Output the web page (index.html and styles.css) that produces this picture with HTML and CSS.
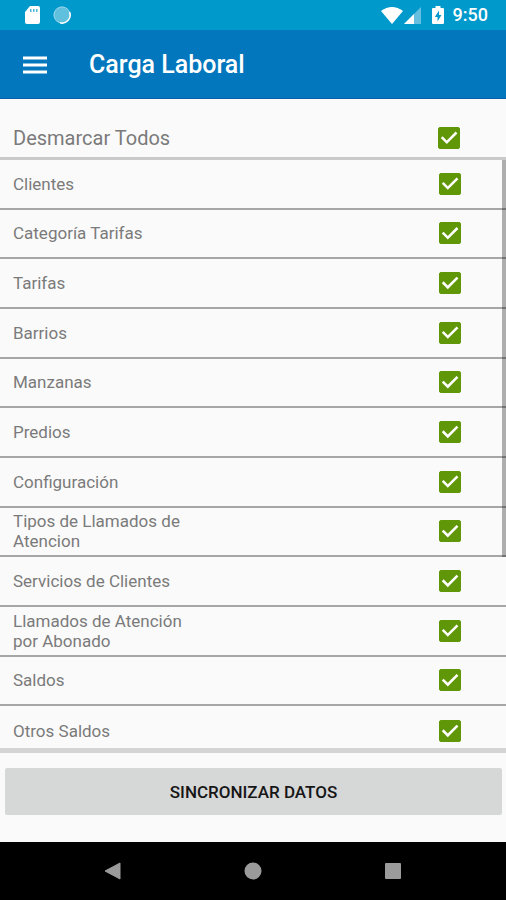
FILE: index.html
```html
<!DOCTYPE html>
<html lang="es">
<head>
<meta charset="utf-8">
<meta name="viewport" content="width=device-width, initial-scale=1">
<title>Carga Laboral</title>
<link rel="stylesheet" href="styles.css">
</head>
<body>
<div class="status">
  <div class="status-group">
    <svg class="sd" width="16" height="20" viewBox="0 0 16 20"><path d="M6 1h8q2 0 2 2v14q0 2-2 2H3q-2 0-2-2V7z" fill="#fff"/><path d="M6 4h1.500v3H6zM9 4h1.500v3H9zM12 4h1.500v3H12z" fill="#4cb6da"/></svg>
    <svg width="20" height="20" viewBox="0 0 20 20"><circle cx="10" cy="10" r="8.500" fill="#62c0df"/><circle cx="10" cy="10" r="8" fill="none" stroke="#8fd2e8" stroke-width="1"/><path d="M17.500 7A8 8 0 0 1 8 17.800" fill="none" stroke="#fff" stroke-width="1.500"/></svg>
  </div>
  <div class="status-group status-right">
    <svg width="24" height="20" viewBox="0 0 24 20"><path d="M1 6Q12-2 23 6L12 19z" fill="#fff"/></svg>
    <svg width="18" height="20" viewBox="0 0 18 20"><path d="M17 2v17H0z" fill="#66bfdf"/><path d="M10 9v10H0z" fill="#fff"/></svg>
    <svg class="battery" width="12" height="20" viewBox="0 0 12 20"><path d="M3.500 1h5v2H11q1 0 1 1v14q0 1-1 1H1q-1 0-1-1V4q0-1 1-1h2.500z" fill="#fff"/><path d="M7 5.500L2.800 12H5.500v4.500L9.500 10H7z" fill="#0799cd"/></svg>
    <span class="time">9:50</span>
  </div>
</div>
<header class="bar">
  <button class="menu" type="button" aria-label="Menú"><svg width="24" height="18" viewBox="0 0 24 18"><path d="M0 2h24M0 9h24M0 16h24" stroke="#fff" stroke-width="3"/></svg></button>
  <h1>Carga Laboral</h1>
</header>
<main>
  <div class="all"><label for="all">Desmarcar Todos</label><input id="all" type="checkbox" checked></div>
  <div class="list-wrap">
    <ul class="list">
      <li><label for="c1">Clientes</label><input id="c1" type="checkbox" checked></li>
      <li><label for="c2">Categoría Tarifas</label><input id="c2" type="checkbox" checked></li>
      <li><label for="c3">Tarifas</label><input id="c3" type="checkbox" checked></li>
      <li><label for="c4">Barrios</label><input id="c4" type="checkbox" checked></li>
      <li><label for="c5">Manzanas</label><input id="c5" type="checkbox" checked></li>
      <li><label for="c6">Predios</label><input id="c6" type="checkbox" checked></li>
      <li><label for="c7">Configuración</label><input id="c7" type="checkbox" checked></li>
      <li><label for="c8">Tipos de Llamados de Atencion</label><input id="c8" type="checkbox" checked></li>
      <li><label for="c9">Servicios de Clientes</label><input id="c9" type="checkbox" checked></li>
      <li><label for="c10">Llamados de Atención por Abonado</label><input id="c10" type="checkbox" checked></li>
      <li><label for="c11">Saldos</label><input id="c11" type="checkbox" checked></li>
      <li><label for="c12">Otros Saldos</label><input id="c12" type="checkbox" checked></li>
    </ul>
    <div class="thumb"></div>
  </div>
  <div class="action"><button class="sync" type="button">SINCRONIZAR DATOS</button></div>
</main>
<nav class="nav">
  <button type="button" aria-label="Atrás"><svg width="20" height="20" viewBox="0 0 20 20"><path d="M17 2v16L2 10z" fill="#9b9b9b" stroke="#9b9b9b" stroke-linejoin="round"/></svg></button>
  <button type="button" aria-label="Inicio"><svg width="20" height="20" viewBox="0 0 20 20"><circle cx="10" cy="10" r="8.500" fill="#9b9b9b"/></svg></button>
  <button type="button" aria-label="Recientes"><svg width="20" height="20" viewBox="0 0 20 20"><rect x="2" y="2" width="16" height="16" rx="1" fill="#9b9b9b"/></svg></button>
</nav>
</body>
</html>
```
FILE: styles.css
```css
* { box-sizing: border-box; }
body {
  margin: 0;
  min-height: 100vh;
  display: flex;
  flex-direction: column;
  background: #fafafa;
  color: #7a7a7a;
  font-family: Roboto, "Liberation Sans", sans-serif;
}
svg { display: block; }
button { border: 0; padding: 0; background: none; font-family: inherit; }
.status {
  height: 30px;
  padding: 0 18px 0 24px;
  display: flex;
  align-items: center;
  justify-content: space-between;
  background: #0099cc;
}
.status-group { display: flex; align-items: center; gap: 12px; }
.status-right { gap: 0; }
.battery { margin: 0 9px 0 10px; }
.time { color: #fff; font-size: 18px; font-weight: 500; line-height: 20px; }
.bar {
  height: 69px;
  padding: 2px 23px 0;
  display: flex;
  align-items: center;
  gap: 42px;
  background: #0277bd;
  border-bottom: 1px solid #0a5ea8;
}
h1 { margin: 0; color: #fff; font-size: 25px; font-weight: 500; line-height: 32px; }
main { flex: 1; display: flex; flex-direction: column; }
.all {
  height: 61px;
  padding: 20px 46px 0 13px;
  display: flex;
  align-items: center;
  justify-content: space-between;
  border-bottom: 3px solid #cacaca;
  font-size: 20px;
  line-height: 24px;
}
.list-wrap { flex: 1; display: flex; position: relative; }
.list {
  flex: 1;
  margin: 0;
  padding: 0;
  list-style: none;
  display: grid;
  grid-template-rows: repeat(11, 50fr) 42fr;
  border-bottom: 5px solid #d4d4d4;
}
.list li {
  min-height: 0;
  padding: 0 45px 0 13px;
  display: flex;
  align-items: center;
  justify-content: space-between;
  border-bottom: 2px solid #a6a6a6;
}
.list li:last-child { border-bottom: 0; padding-top: 8px; }
.list label { width: 190px; font-size: 17px; line-height: 20px; }
.thumb {
  position: absolute;
  top: 0;
  right: 0;
  width: 4px;
  height: 67%;
  background: #0000004d;
}
input[type="checkbox"] {
  appearance: none;
  width: 22px;
  height: 22px;
  margin: 0;
  border: 1px solid #609708;
  border-radius: 2px;
  background: #fafafa;
}
input[type="checkbox"]:checked { background: #609708; }
input[type="checkbox"]:checked::before {
  content: "";
  display: block;
  height: 100%;
  background: #fff;
  clip-path: polygon(39% 80%, 9% 50%, 18% 41%, 39% 62%, 83% 18%, 92% 27%);
}
.action { padding: 15px 4px 27px 5px; }
.sync {
  width: 100%;
  height: 47px;
  border-radius: 2px;
  background: #d6d7d7;
  color: #161616;
  font-size: 17px;
  font-weight: 500;
}
.nav {
  height: 58px;
  padding: 0 43px;
  display: flex;
  background: #000;
}
.nav button { flex: 1; display: flex; align-items: center; justify-content: center; }
```
